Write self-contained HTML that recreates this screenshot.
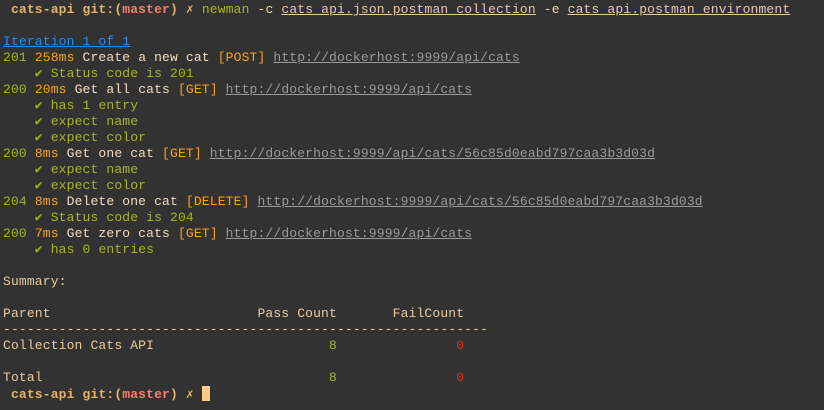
<!DOCTYPE html><html><head><style>
body{margin:0;background:#323232;width:824px;height:410px;overflow:hidden}
pre{margin:0;position:absolute;left:3px;top:2px;font:13px/16px "Liberation Mono",monospace;color:#f2d6b0;letter-spacing:0.15px}
.b{font-weight:bold}.y{color:#e3b465}.r{color:#f47f6a}.g{color:#a6b521}.o{color:#f6a21f}.u{text-decoration:underline}
.t{color:#ebcb9a}.bl{color:#2f88f2;text-decoration:underline}.gr{color:#9a9a9a;text-decoration:underline}.w{color:#f3dcc0}.red{color:#e0341a}
.cur{display:inline-block;width:8px;height:15px;background:#fdc987;vertical-align:-3px}
</style></head><body><pre><span class="b y"> cats-api</span> <span class="b y">git:(</span><span class="b r">master</span><span class="b y">)</span> <span class="b y">✗</span> <span class="g">newman</span> -c <span class="u t">cats_api.json.postman_collection</span> -e <span class="u t">cats_api.postman_environment</span>

<span class="bl">Iteration 1 of 1</span>
<span class="g">201</span> <span class="o">258ms</span> <span class="w">Create a new cat</span> <span class="o">[POST]</span> <span class="gr">http://dockerhost:9999/api/cats</span>
<span class="g">    ✔ Status code is 201</span>
<span class="g">200</span> <span class="o">20ms</span> <span class="w">Get all cats</span> <span class="o">[GET]</span> <span class="gr">http://dockerhost:9999/api/cats</span>
<span class="g">    ✔ has 1 entry</span>
<span class="g">    ✔ expect name</span>
<span class="g">    ✔ expect color</span>
<span class="g">200</span> <span class="o">8ms</span> <span class="w">Get one cat</span> <span class="o">[GET]</span> <span class="gr">http://dockerhost:9999/api/cats/56c85d0eabd797caa3b3d03d</span>
<span class="g">    ✔ expect name</span>
<span class="g">    ✔ expect color</span>
<span class="g">204</span> <span class="o">8ms</span> <span class="w">Delete one cat</span> <span class="o">[DELETE]</span> <span class="gr">http://dockerhost:9999/api/cats/56c85d0eabd797caa3b3d03d</span>
<span class="g">    ✔ Status code is 204</span>
<span class="g">200</span> <span class="o">7ms</span> <span class="w">Get zero cats</span> <span class="o">[GET]</span> <span class="gr">http://dockerhost:9999/api/cats</span>
<span class="g">    ✔ has 0 entries</span>

<span class="t">Summary:</span>

<span class="t">Parent                          Pass Count       FailCount</span>
<span class="t">-------------------------------------------------------------</span>
<span class="t">Collection Cats API</span>                      <span class="g">8</span>               <span class="red">0</span>

<span class="t">Total</span>                                    <span class="g">8</span>               <span class="red">0</span>
<span class="b y"> cats-api</span> <span class="b y">git:(</span><span class="b r">master</span><span class="b y">)</span> <span class="b y">✗</span> <span class="cur"></span></pre></body></html>
